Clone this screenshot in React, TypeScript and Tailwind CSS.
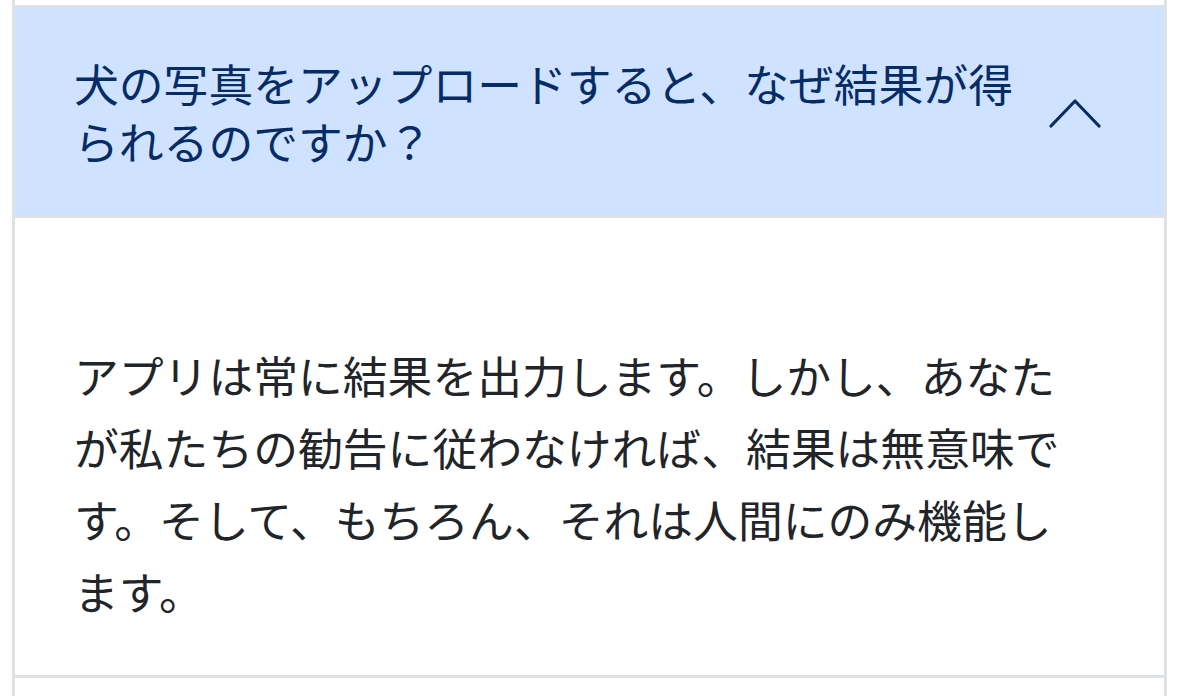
export default function App() {
  const font = { fontFamily: '"Noto Sans CJK JP", "Noto Sans", sans-serif' };
  return (
    <div className="w-[1179px] h-[696px] bg-white overflow-hidden" style={font}>
      <div className="ml-[12px] w-[1155px] h-full border-x-[3px] border-[#dee2e6] flex flex-col">
        <div className="h-[5px] bg-white" />
        <div className="border-t-[3px] border-[#dee2e6]">
          <div className="h-[207px] bg-[#cfe2ff] flex items-center pl-[59px] pr-[63px]">
            <div className="w-[970px] text-[44.8px] leading-[58px] text-[#052c65]">
              犬の写真をアップロードすると、なぜ結果が得られるのですか？
            </div>
            <svg
              className="ml-auto mt-[2px]"
              width="52"
              height="32"
              viewBox="0 0 52 32"
              fill="none"
              stroke="#052c65"
              strokeWidth="3.2"
              strokeLinecap="round"
              strokeLinejoin="round"
            >
              <path d="M2 29 L26 4 L50 29" />
            </svg>
          </div>
        </div>
        <div className="border-t-[3px] border-[#dee2e6] h-[460px] bg-white pl-[59px] pt-[121px]">
          <p className="w-[1000px] text-[44.8px] leading-[72px] text-[#212529]">
            アプリは常に結果を出力します。しかし、あなたが私たちの勧告に従わなければ、結果は無意味です。そして、もちろん、それは人間にのみ機能します。
          </p>
        </div>
        <div className="border-t-[3px] border-[#dee2e6] flex-1 bg-white" />
      </div>
    </div>
  );
}
